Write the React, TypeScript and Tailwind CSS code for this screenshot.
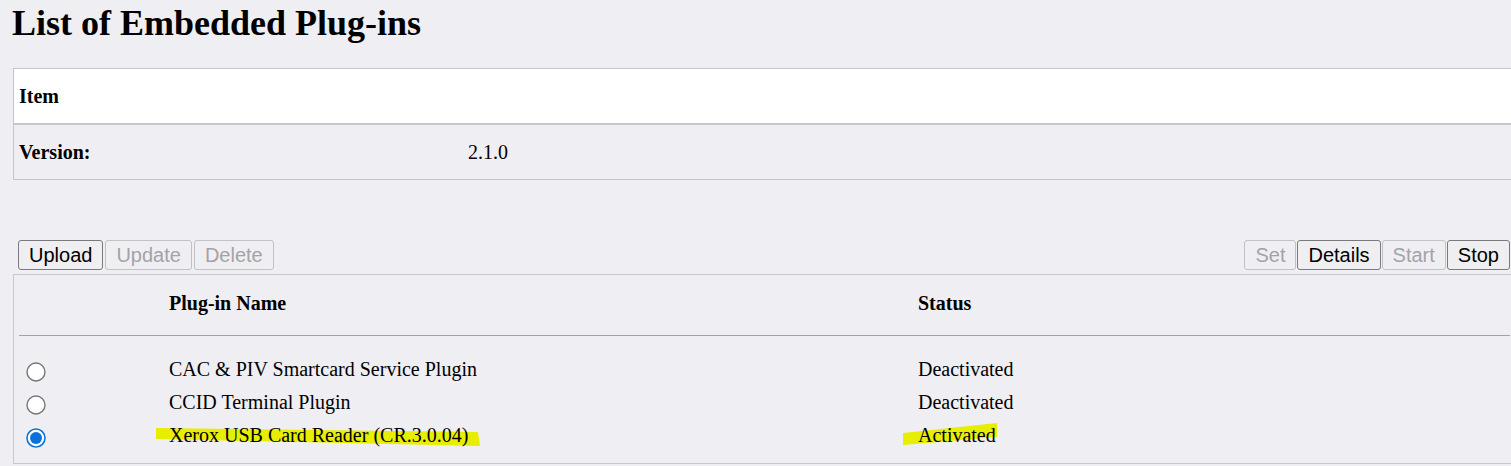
import clsx from 'clsx'

const plugins = [
  { name: 'CAC & PIV Smartcard Service Plugin', status: 'Deactivated', checked: false },
  { name: 'CCID Terminal Plugin', status: 'Deactivated', checked: false },
  { name: 'Xerox USB Card Reader (CR.3.0.04)', status: 'Activated', checked: true },
]

function Button({ label, disabled }: { label: string; disabled?: boolean }) {
  return (
    <button
      disabled={disabled}
      className={clsx(
        'h-[30px] rounded-[3px] border px-[10px] font-["Liberation_Sans",Arial,sans-serif] text-[20px] leading-[28px]',
        disabled
          ? 'border-[#c2c2c6] bg-[#efeff3] text-[#a3a3a6]'
          : 'border-[#7a7a7e] bg-[#efeff2] text-black',
      )}
    >
      {label}
    </button>
  )
}

function Radio({ checked }: { checked: boolean }) {
  return (
    <svg width="20" height="20" viewBox="0 0 20 20" className="mt-[5px] shrink-0">
      {checked ? (
        <>
          <circle cx="10" cy="10" r="9" fill="white" stroke="#0b72d9" strokeWidth="1.6" />
          <circle cx="10" cy="10" r="6" fill="#0b72d9" />
        </>
      ) : (
        <circle cx="10" cy="10" r="9" fill="white" stroke="#767676" strokeWidth="1.4" />
      )}
    </svg>
  )
}

export default function App() {
  return (
    <div className="relative min-h-screen w-full overflow-hidden bg-[#efeef3] font-['Liberation_Serif','Times_New_Roman',serif] text-black">
      {/* marker highlights */}
      <svg className="pointer-events-none absolute left-0 top-0" width="1511" height="466">
        <polygon points="156,428 478,432 480,446 156,439" fill="#e8ee00" />
        <polygon points="903,433 997,423 997,437 903,445" fill="#e8ee00" />
      </svg>

      <div className="relative ml-[13px] w-[1502px]">
        <h1 className="-ml-[1px] mt-[3px] text-[36px] font-bold leading-[40px]">List of Embedded Plug-ins</h1>

        {/* Item table */}
        <div className="mt-[25px] border border-r-0 border-[#c6c6ca] text-[20px] font-bold leading-[23px]">
          <div className="flex h-[56px] items-center border-b-2 border-[#c6c6ca] bg-white pl-[5px]">Item</div>
          <div className="flex h-[54px] items-center pl-[5px]">
            <div className="w-[449px]">Version:</div>
            <div className="font-normal">2.1.0</div>
          </div>
        </div>

        {/* actions */}
        <div className="mt-[60px] flex justify-between px-[5px]">
          <div className="flex gap-[2px]">
            <Button label="Upload" />
            <Button label="Update" disabled />
            <Button label="Delete" disabled />
          </div>
          <div className="flex gap-[1px]">
            <Button label="Set" disabled />
            <Button label="Details" />
            <Button label="Start" disabled />
            <Button label="Stop" />
          </div>
        </div>

        {/* plug-in list */}
        <div className="mt-[4px] border border-r-0 border-[#c8c8cc] pb-[11px] text-[20px] leading-[23px]">
          <div className="mx-[5px] flex h-[61px] border-b border-[#a2a2a4] pt-[17px] font-bold">
            <div className="w-[150px]" />
            <div className="w-[749px]">Plug-in Name</div>
            <div>Status</div>
          </div>
          <div className="pt-[17px]">
            {plugins.map((p) => (
              <div key={p.name} className="flex h-[33px] items-center">
                <div className="w-[155px] pl-[12px]">
                  <Radio checked={p.checked} />
                </div>
                <div className="w-[749px]">{p.name}</div>
                <div>{p.status}</div>
              </div>
            ))}
          </div>
        </div>
      </div>
    </div>
  )
}
